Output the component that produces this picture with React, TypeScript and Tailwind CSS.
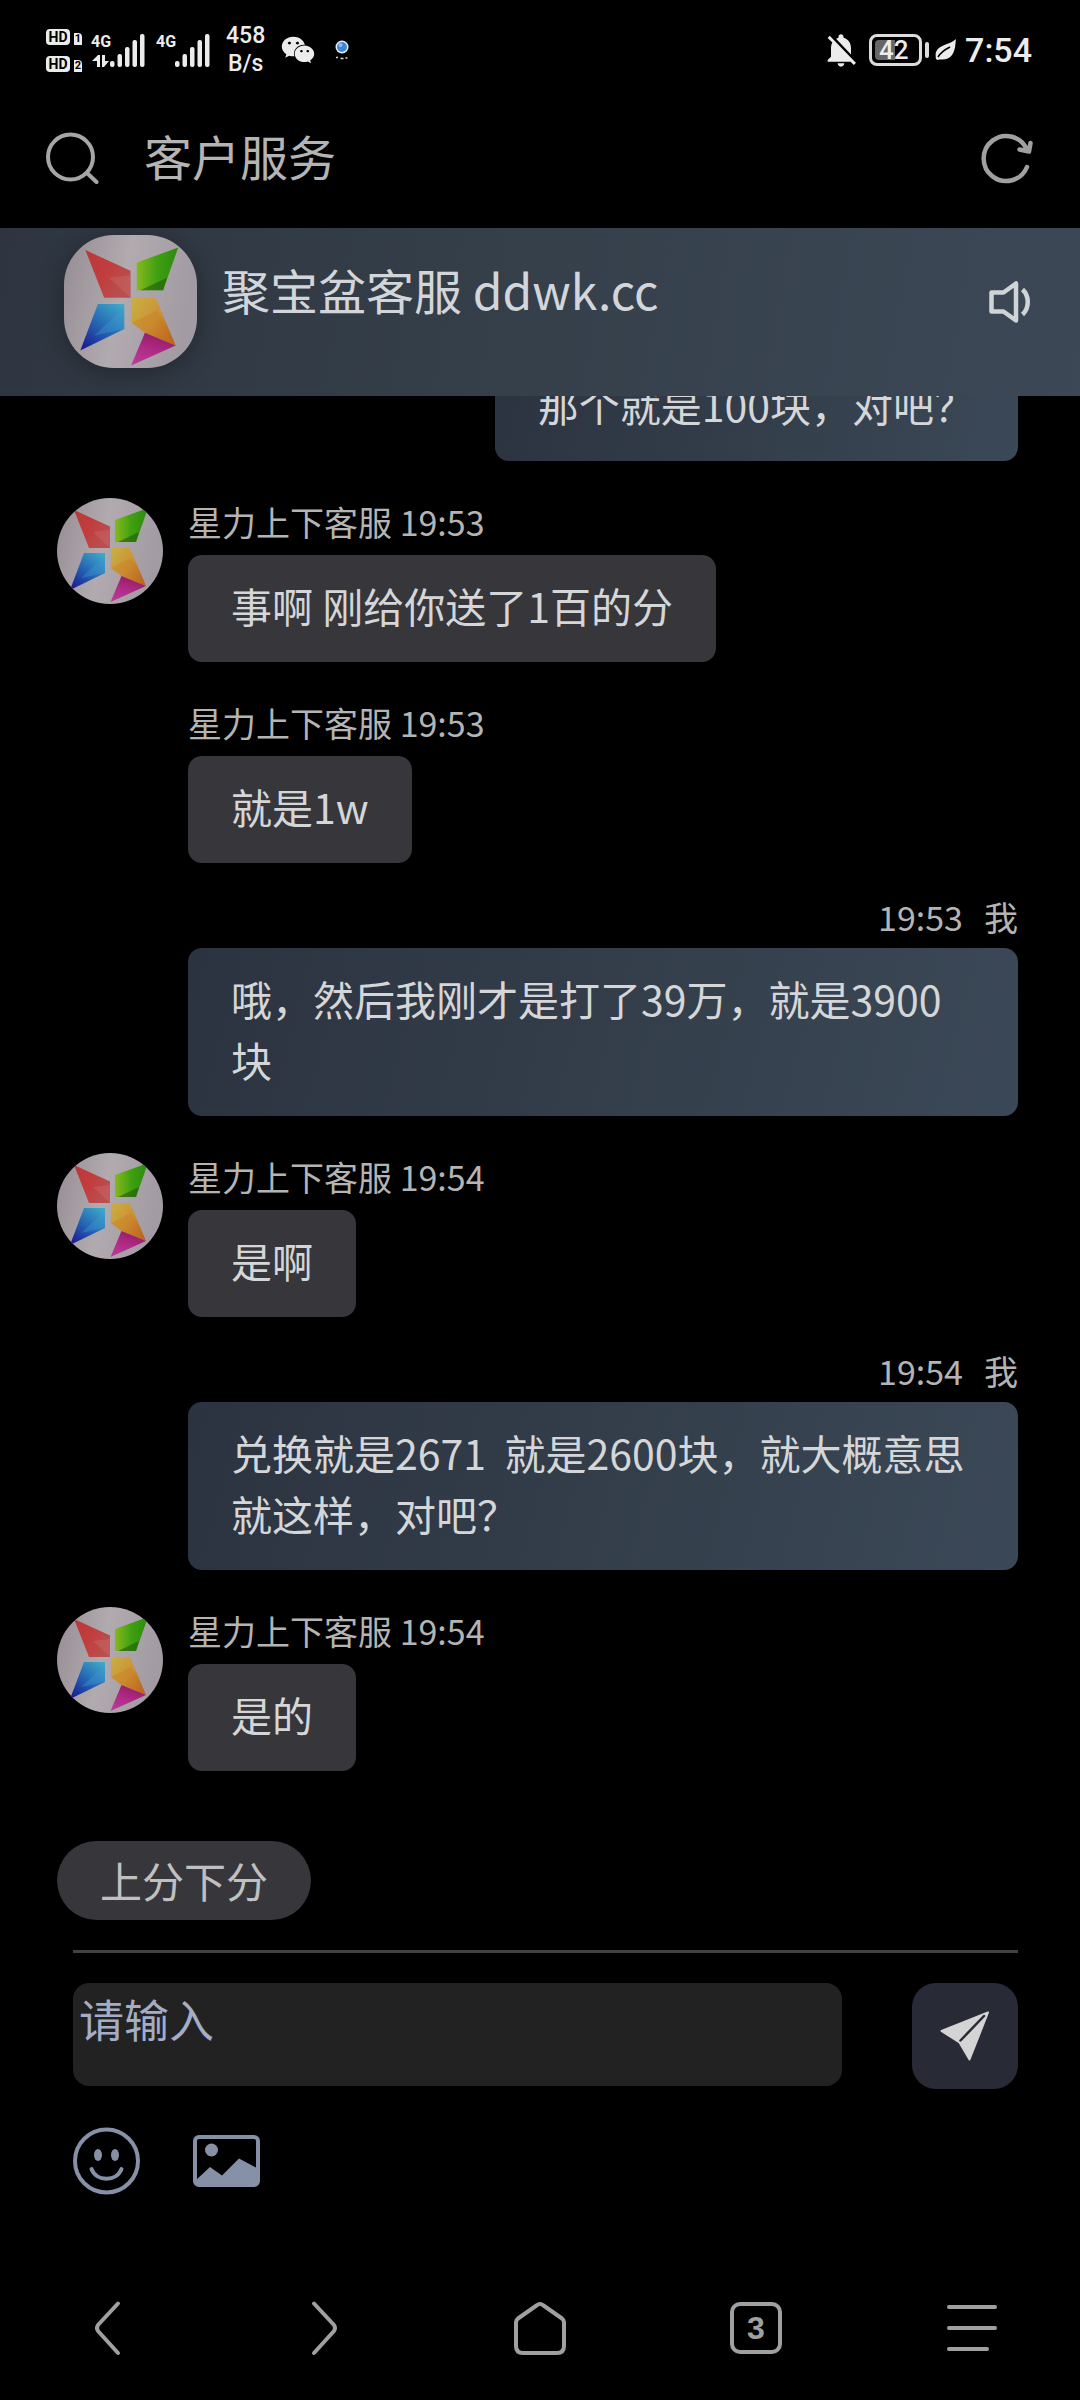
import { useId } from "react";
import { FaWeixin } from "react-icons/fa";
import { MdNotificationsOff } from "react-icons/md";

type Message = {
  id: number;
  from: "agent" | "me";
  time?: string;
  text: string;
  avatar?: boolean;
};

const AGENT = "星力上下客服";

const messages: Message[] = [
  { id: 1, from: "me", text: "那个就是100块，对吧？" },
  { id: 2, from: "agent", time: "19:53", text: "事啊 刚给你送了1百的分", avatar: true },
  { id: 3, from: "agent", time: "19:53", text: "就是1w" },
  { id: 4, from: "me", time: "19:53", text: "哦，然后我刚才是打了39万，就是3900块" },
  { id: 5, from: "agent", time: "19:54", text: "是啊", avatar: true },
  { id: 6, from: "me", time: "19:54", text: "兑换就是2671\u00a0 就是2600块，就大概意思就这样，对吧？" },
  { id: 7, from: "agent", time: "19:54", text: "是的", avatar: true },
];

// name, start colour, middle colour, end colour, gradient vector
const logoStops: [string, string, string, string, number[]][] = [
  ["bg", "#958d93", "#b1aaaf", "#a39ba3", [0, 0, 1, 0.2]],
  ["red", "#b8393b", "#c23c3c", "#b85050", [0, 0, 1, 0.6]],
  ["green", "#86b81e", "#3fa010", "#2c8a10", [0, 0.3, 1, 0.3]],
  ["blue", "#3fa8c8", "#2668b4", "#1b1f94", [0.9, 0, 0.2, 1]],
  ["orange", "#c9ab40", "#cc9236", "#b8601e", [0, 0.2, 0.9, 0.9]],
  ["pink", "#941c62", "#b02a86", "#b83c96", [0.6, 0, 0.2, 1]],
];

function Logo({ className }: { className: string }) {
  const id = useId();
  return (
    <svg viewBox="0 0 106 106" className={className} aria-hidden="true">
      <defs>
        {logoStops.map(([name, a, b, c, [x1, y1, x2, y2]]) => (
          <linearGradient key={name} id={id + name} x1={x1} y1={y1} x2={x2} y2={y2}>
            <stop offset="0" stopColor={a} />
            <stop offset="0.5" stopColor={b} />
            <stop offset="1" stopColor={c} />
          </linearGradient>
        ))}
      </defs>
      <rect width="106" height="106" fill={`url(#${id}bg)`} />
      <path d="M17 12 53 28.500V50H32Z" fill={`url(#${id}red)`} />
      <path d="M53 32V50L36 34Z" fill="#d07070" fillOpacity="0.35" />
      <path d="M58 22 91 10 79 44H58Z" fill={`url(#${id}green)`} />
      <path d="M61 44 82 34 79 44Z" fill="#1f5a0c" fillOpacity="0.6" />
      <path d="M27 55H48V75L13 92Z" fill={`url(#${id}blue)`} />
      <path d="M48 58V75L24 80Z" fill="#3f9fd8" fillOpacity="0.35" />
      <path d="M54 50H73L89 88 64.500 78 54 70Z" fill={`url(#${id}orange)`} />
      <path d="M54 70 74 60 89 88 64.500 78Z" fill="#c87820" fillOpacity="0.35" />
      <path d="M64.500 78 89 88 53.500 104Z" fill={`url(#${id}pink)`} />
    </svg>
  );
}

function Signal({ data }: { data?: boolean }) {
  return (
    <div className="flex h-9 items-end">
      <div className="flex h-9 w-[18px] flex-col items-center justify-between">
        <span className="text-[16px] leading-5 font-bold">4G</span>
        {data && (
          <svg viewBox="0 0 18 13" className="h-[13px] w-[18px] shrink-0" fill="currentColor" aria-hidden="true">
            <path d="M0 6 6 0h2v12H5V6ZM10 0h3v6h4l-5 6h-2Z" />
          </svg>
        )}
      </div>
      <svg viewBox="0 0 35 34" className="h-[34px] w-[35px]" fill="currentColor" aria-hidden="true">
        <rect x="0" y="27" width="4.500" height="6" rx="2" />
        <rect x="7.500" y="20" width="4.500" height="13" rx="2" />
        <rect x="15" y="13" width="4.500" height="20" rx="2" />
        <rect x="22.500" y="6" width="4.500" height="27" rx="2" />
        <rect x="30" y="0" width="4.500" height="33" rx="2" />
      </svg>
    </div>
  );
}

function HdBadge({ sim }: { sim: string }) {
  return (
    <div className="flex items-end gap-1">
      <span className="flex h-4 w-6 items-center justify-center rounded-sm bg-[#ececec] text-[14px] leading-4 font-bold text-black">HD</span>
      <span className="flex h-3 w-2 items-center justify-center rounded-tr bg-[#ececec] text-[11px] leading-3 font-bold text-black">{sim}</span>
    </div>
  );
}

function StatusBar() {
  return (
    <div className="flex h-[100px] shrink-0 items-center justify-between pr-12 pl-[46px] font-[Roboto,sans-serif] text-[#ececec]">
      <div className="flex items-center">
        <div className="flex flex-col gap-[11px]">
          <HdBadge sim="1" />
          <HdBadge sim="2" />
        </div>
        <div className="ml-2.5 flex gap-3">
          <Signal data />
          <Signal />
        </div>
        <div className="ml-4 flex flex-col items-center text-[23px] leading-7 font-medium">
          <span>458</span>
          <span>B/s</span>
        </div>
        <FaWeixin className="ml-4 size-[34px]" aria-hidden="true" />
        <svg viewBox="0 0 14 20" className="ml-5 h-5 w-3.5" aria-hidden="true">
          <circle cx="7" cy="7" r="6.500" fill="#e6f0fa" />
          <circle cx="7" cy="7" r="5" fill="#3f86d6" />
          <circle cx="5.500" cy="5" r="2" fill="#8dbcf0" />
          <path d="M1 17.500h2M5.500 18.500h3M10.500 18h2" stroke="#d8d8d8" strokeWidth="1.500" />
        </svg>
      </div>
      <div className="flex items-center">
        <MdNotificationsOff className="size-10" aria-hidden="true" />
        <div className="ml-2 flex h-8 w-[53px] items-center rounded-lg border-[3px] border-[#dcdcdc] p-[3px]">
          <div className="h-full w-5 rounded-l bg-[#666]" />
          <span className="-ml-4 text-[26px] leading-5 font-medium">42</span>
        </div>
        <div className="ml-[3px] h-4 w-1 rounded-sm bg-[#dcdcdc]" />
        <svg viewBox="0 0 22 22" className="ml-1.5 size-[22px]" aria-hidden="true">
          <path d="M21 0C20 3 22 21 7 20.500 5 20.500 3.500 20 2.500 21L1 20C-2 5 14 7 21 0Z" fill="currentColor" />
          <path d="M3 18C6 13 11 10 15 8" fill="none" stroke="#000" strokeWidth="1.500" />
        </svg>
        <span className="ml-2 text-[34px] leading-10 font-medium">7:54</span>
      </div>
    </div>
  );
}

function TitleBar() {
  return (
    <header className="flex h-32 shrink-0 items-center px-[46px] pb-3 text-[#b4b4b4]">
      <button type="button" aria-label="搜索">
        <svg viewBox="0 0 54 52" className="h-[52px] w-[54px]" fill="none" stroke="#a6a6a6" strokeWidth="4" strokeLinecap="round">
          <circle cx="24.500" cy="25" r="22.500" />
          <path d="m41 41 9.500 9" />
        </svg>
      </button>
      <h1 className="ml-11 pb-1.5 text-[48px] leading-[60px]">客户服务</h1>
      <button type="button" aria-label="刷新" className="ml-auto">
        <svg viewBox="0 0 54 52" className="h-[52px] w-[54px]" fill="none" stroke="#a0a0a0" strokeWidth="4.500" strokeLinecap="round" strokeLinejoin="round">
          <path d="M47 35A22.500 22.500 0 1 1 47 18M50.500 11 49 19.500 39.500 17.500" />
        </svg>
      </button>
    </header>
  );
}

function AccountBanner() {
  return (
    <section className="flex h-[168px] shrink-0 items-start bg-linear-[100deg] from-[#2e3540] via-[#35404b] to-[#3c4856] px-12 pt-[7px]">
      <Logo className="ml-4 size-[133px] rounded-[50px] shadow-[0_4px_24px_rgba(0,0,0,0.3)]" />
      <h2 className="mt-5 ml-[25px] text-[48px] leading-[68px] text-[#d2d6da]">聚宝盆客服 ddwk.cc</h2>
      <button type="button" aria-label="声音" className="mt-[46px] ml-auto">
        <svg viewBox="0 0 44 42" className="h-[42px] w-11" fill="none" stroke="#d0d4d6" strokeWidth="4.500" strokeLinejoin="round">
          <path d="M3.500 11.500h12L28 2.500v37l-12.500-9h-12Z" />
          <path d="M34.500 8.500c7 6.500 7 18.500 0 25" />
        </svg>
      </button>
    </section>
  );
}

function MessageRow({ message }: { message: Message }) {
  if (message.from === "me") {
    return (
      <li className="ml-[131px] flex shrink-0 flex-col items-end">
        {message.time && (
          <p className="flex h-12 gap-[21px] text-[34px] leading-[34px] text-[#b4b4b4]">
            <time>{message.time}</time>
            <span>我</span>
          </p>
        )}
        <p className="rounded-[14px] bg-linear-[105deg] from-[#2c3340] via-[#333e4a] to-[#3b4857] px-[43px] pt-5 pb-[26px] text-[41px] leading-[61px] text-[#d4d6d8]">
          {message.text}
        </p>
      </li>
    );
  }
  return (
    <li className="flex shrink-0 items-start gap-[25px]">
      <div className="w-[106px] shrink-0">
        {message.avatar && <Logo className="size-[106px] rounded-full" />}
      </div>
      <div className="flex flex-col items-start">
        <p className="h-[57px] text-[34px] leading-[48px] text-[#b4b4b4]">
          {AGENT} <time>{message.time}</time>
        </p>
        <p className="rounded-[14px] bg-[#37373b] px-[43px] pt-5 pb-[26px] text-[41px] leading-[61px] text-[#d4d6d8]">
          {message.text}
        </p>
      </div>
    </li>
  );
}

function Composer() {
  return (
    <form className="shrink-0 pr-[62px] pl-[57px]" onSubmit={(e) => e.preventDefault()}>
      <button type="button" className="flex h-[79px] items-center rounded-full bg-[#37373b] px-[43px] pb-0.5 text-[42px] leading-[60px] text-[#c0c0c0]">
        上分下分
      </button>
      <div className="ml-4">
        <hr className="mt-[30px] border-t-[3px] border-[#424242]" />
        <div className="mt-[30px] flex items-start gap-[70px]">
          <textarea
            aria-label="消息"
            placeholder="请输入"
            className="h-[103px] min-w-0 flex-1 resize-none overflow-hidden rounded-2xl bg-[#222222] px-1.5 pt-1.5 text-[45px] leading-[60px] text-[#d4d6d8] outline-none placeholder:text-[#a3adc6]"
          />
          <button type="submit" aria-label="发送" className="flex size-[106px] shrink-0 items-center justify-center rounded-3xl bg-[#282a36]">
            <svg viewBox="0 0 50 50" className="size-[50px]" fill="#d4d4d4" stroke="#d4d4d4" strokeWidth="2" strokeLinejoin="round">
              <path d="M48 1.500 1.500 20 19.500 31.500 29.500 48.500Z" />
              <path d="M44 5 20.500 29.500" stroke="#282a36" strokeWidth="2.500" strokeLinecap="round" />
            </svg>
          </button>
        </div>
        <div className="mt-[38px] flex items-center gap-[52px]">
          <button type="button" aria-label="表情">
            <svg viewBox="0 0 68 68" className="size-[68px]" fill="none" stroke="#8690a6" strokeWidth="4">
              <circle cx="33.500" cy="34" r="31.500" />
              <ellipse cx="25" cy="28" rx="4" ry="6" fill="#8690a6" stroke="none" />
              <ellipse cx="42" cy="28" rx="4" ry="6" fill="#8690a6" stroke="none" />
              <path d="M18.500 42c5 13 25 13 30 0" strokeLinecap="round" />
            </svg>
          </button>
          <button type="button" aria-label="图片">
            <svg viewBox="0 0 68 52" className="h-[52px] w-[68px]" fill="#8690a6">
              <rect x="2" y="2" width="63" height="48" rx="4" fill="none" stroke="#8690a6" strokeWidth="4" />
              <circle cx="18.500" cy="15" r="6.500" />
              <path d="M3 45 17 32 29 40.500 46 23.500 64 33v17H4Z" />
            </svg>
          </button>
        </div>
      </div>
    </form>
  );
}

function BottomNav() {
  const icon = "size-14 fill-none stroke-[#a0a0a0] stroke-[4]";
  return (
    <nav className="mt-[61px] grid h-36 shrink-0 grid-cols-5 place-items-center text-[#a0a0a0]">
      <button type="button" aria-label="后退">
        <svg viewBox="0 0 56 56" className={icon} strokeLinecap="round" strokeLinejoin="round">
          <path d="M38 3.500 18 25Q16 28 18 31L38 53" />
        </svg>
      </button>
      <button type="button" aria-label="前进">
        <svg viewBox="0 0 56 56" className={icon} strokeLinecap="round" strokeLinejoin="round">
          <path d="M18 3.500 38 25Q40 28 38 31L18 53" />
        </svg>
      </button>
      <button type="button" aria-label="主页">
        <svg viewBox="0 0 56 56" className={icon} strokeLinejoin="round">
          <path d="M24.500 5.500Q28 2.500 31.500 5.500L50 18.500Q52 20 52 23V46Q52 53 45 53H11Q4 53 4 46V23Q4 20 6 18.500Z" />
        </svg>
      </button>
      <button type="button" aria-label="标签页" className="flex size-[52px] items-center justify-center rounded-[10px] border-4 border-[#a0a0a0] font-[Liberation_Sans,sans-serif] text-[32px] leading-8 font-bold">
        3
      </button>
      <button type="button" aria-label="菜单">
        <svg viewBox="0 0 56 56" className={icon} strokeLinecap="round">
          <path d="M5 7H51M5 28H51M5 49H43" />
        </svg>
      </button>
    </nav>
  );
}

export default function App() {
  return (
    <div className="flex h-screen flex-col bg-black font-['Noto_Sans_CJK_SC',sans-serif]">
      <StatusBar />
      <TitleBar />
      <AccountBanner />
      <main className="flex min-h-0 flex-1 flex-col justify-end overflow-hidden pr-[62px] pb-[70px] pl-[57px]">
        <ul className="flex flex-col gap-[37px]">
          {messages.map((m) => (
            <MessageRow key={m.id} message={m} />
          ))}
        </ul>
      </main>
      <Composer />
      <BottomNav />
    </div>
  );
}
